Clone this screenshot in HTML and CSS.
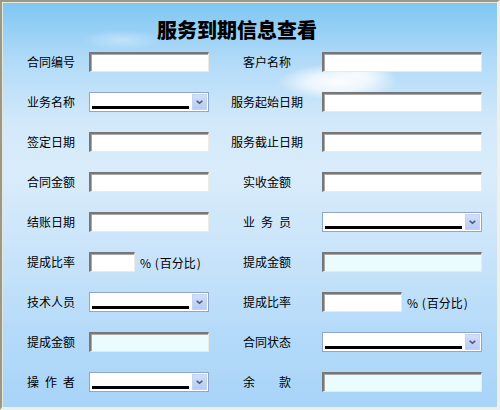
FILE: index.html
```html
<!DOCTYPE html>
<html lang="zh-CN">
<head>
<meta charset="utf-8">
<title>服务到期信息查看</title>
<link rel="stylesheet" href="styles.css">
</head>
<body>
<div class="frame">
  <h1 class="title">服务到期信息查看</h1>
  <div class="form">
    <div class="label">合同编号</div>
    <div class="cell"><div class="inp w-l"></div></div>
    <div class="label r">客户名称</div>
    <div class="cell"><div class="inp w-r"></div></div>

    <div class="label">业务名称</div>
    <div class="cell"><div class="sel w-l"><span class="bar"></span><span class="btn"><svg viewBox="0 0 16 16" width="16" height="16"><path d="M4.5 6.5 L8 9.5 L11.5 6.5" fill="none" stroke="#4d6185" stroke-width="2"/></svg></span></div></div>
    <div class="label r">服务起始日期</div>
    <div class="cell"><div class="inp w-r"></div></div>

    <div class="label">签定日期</div>
    <div class="cell"><div class="inp w-l"></div></div>
    <div class="label r">服务截止日期</div>
    <div class="cell"><div class="inp w-r"></div></div>

    <div class="label">合同金额</div>
    <div class="cell"><div class="inp w-l"></div></div>
    <div class="label r">实收金额</div>
    <div class="cell"><div class="inp w-r"></div></div>

    <div class="label">结账日期</div>
    <div class="cell"><div class="inp w-l"></div></div>
    <div class="label r"><span class="sp6">业务员</span></div>
    <div class="cell"><div class="sel w-r"><span class="bar"></span><span class="btn"><svg viewBox="0 0 16 16" width="16" height="16"><path d="M4.5 6.5 L8 9.5 L11.5 6.5" fill="none" stroke="#4d6185" stroke-width="2"/></svg></span></div></div>

    <div class="label">提成比率</div>
    <div class="cell"><div class="inp w-sl"></div><span class="pct">% <span class="par">(</span>百分比<span class="par">)</span></span></div>
    <div class="label r">提成金额</div>
    <div class="cell"><div class="inp w-r cyan"></div></div>

    <div class="label">技术人员</div>
    <div class="cell"><div class="sel w-l"><span class="bar"></span><span class="btn"><svg viewBox="0 0 16 16" width="16" height="16"><path d="M4.5 6.5 L8 9.5 L11.5 6.5" fill="none" stroke="#4d6185" stroke-width="2"/></svg></span></div></div>
    <div class="label r">提成比率</div>
    <div class="cell"><div class="inp w-sr"></div><span class="pct">% <span class="par">(</span>百分比<span class="par">)</span></span></div>

    <div class="label">提成金额</div>
    <div class="cell"><div class="inp w-l cyan"></div></div>
    <div class="label r">合同状态</div>
    <div class="cell"><div class="sel w-r"><span class="bar"></span><span class="btn"><svg viewBox="0 0 16 16" width="16" height="16"><path d="M4.5 6.5 L8 9.5 L11.5 6.5" fill="none" stroke="#4d6185" stroke-width="2"/></svg></span></div></div>

    <div class="label"><span class="sp6">操作者</span></div>
    <div class="cell"><div class="sel w-l"><span class="bar"></span><span class="btn"><svg viewBox="0 0 16 16" width="16" height="16"><path d="M4.5 6.5 L8 9.5 L11.5 6.5" fill="none" stroke="#4d6185" stroke-width="2"/></svg></span></div></div>
    <div class="label r"><span class="sp24">余款</span></div>
    <div class="cell"><div class="inp w-r cyan"></div></div>
  </div>
</div>
</body>
</html>
```
FILE: styles.css
```css
html, body {
  margin: 0;
  padding: 0;
}
body {
  font-family: "Noto Sans CJK SC", "Noto Sans", sans-serif;
  font-size: 12px;
  color: #000;
}
.frame {
  box-sizing: border-box;
  width: 500px;
  height: 410px;
  border-top: 2px solid #9a9888;
  border-left: 2px solid #9a9888;
  border-right: 3px solid #f2efe4;
  border-bottom: 3px solid #f2efe4;
  box-shadow: inset 1px 1px 0 #e9e6da;
  background:
    radial-gradient(ellipse 60px 18px at 336px 80px, rgba(255,255,255,0.95), rgba(255,255,255,0.7) 50%, rgba(255,255,255,0) 100%),
    radial-gradient(ellipse 34px 14px at 360px 70px, rgba(255,255,255,0.7), rgba(255,255,255,0) 100%),
    radial-gradient(ellipse 40px 10px at 120px 38px, rgba(255,255,255,0.35), rgba(255,255,255,0) 100%),
    linear-gradient(to bottom, #7ec6f3 0%, #b0daf8 14%, #d2e9fa 30%, #d9ecfb 42%, #c9e4fa 62%, #b4daf9 82%, #a8d4f8 100%);
  display: flex;
  flex-direction: column;
}
.title {
  margin: 0;
  height: 40px;
  box-sizing: border-box;
  padding: 16px 0 0 155px;
  font-size: 20px;
  line-height: 24px;
  font-weight: 900;
}
.form {
  display: grid;
  grid-template-columns: 62px 123px 110px 1fr;
  grid-auto-rows: 40px;
  padding-left: 25px;
}
.label {
  display: flex;
  align-items: center;
  white-space: nowrap;
  line-height: 14px;
}
.label.r {
  justify-content: center;
}
.sp6 {
  letter-spacing: 6px;
  margin-right: -6px;
}
.sp24 {
  letter-spacing: 24px;
  margin-right: -24px;
}
.cell {
  display: flex;
  align-items: center;
}
.inp {
  box-sizing: border-box;
  height: 20px;
  background: #fff;
  border-top: 2px solid #777;
  border-left: 2px solid #777;
  border-right: 1px solid #eeeadf;
  border-bottom: 1px solid #eeeadf;
  box-shadow: inset 1px 1px 0 #a9a9a9;
}
.inp.cyan {
  background: #eafcfd;
}
.w-l { width: 120px; }
.w-r { width: 160px; }
.w-sl { width: 46px; }
.w-sr { width: 80px; }
.pct {
  margin-left: 5px;
  white-space: nowrap;
}
.par {
  margin: 0 1px;
}
.sel {
  box-sizing: border-box;
  height: 20px;
  background: #fff;
  border: 1px solid #8ea7c8;
  display: flex;
  align-items: center;
  padding: 0 1px 0 2px;
}
.bar {
  flex: 1;
  height: 3px;
  background: #000;
  align-self: flex-end;
  margin-bottom: 2px;
  margin-right: 3px;
}
.btn {
  width: 15px;
  height: 16px;
  box-sizing: border-box;
  border: 1px solid #c3d3f4;
  background: linear-gradient(to bottom, #d2defa, #b9cbf3);
  display: flex;
  align-items: center;
  justify-content: center;
}
.btn svg {
  display: block;
  width: 13px;
  height: 14px;
}
```
